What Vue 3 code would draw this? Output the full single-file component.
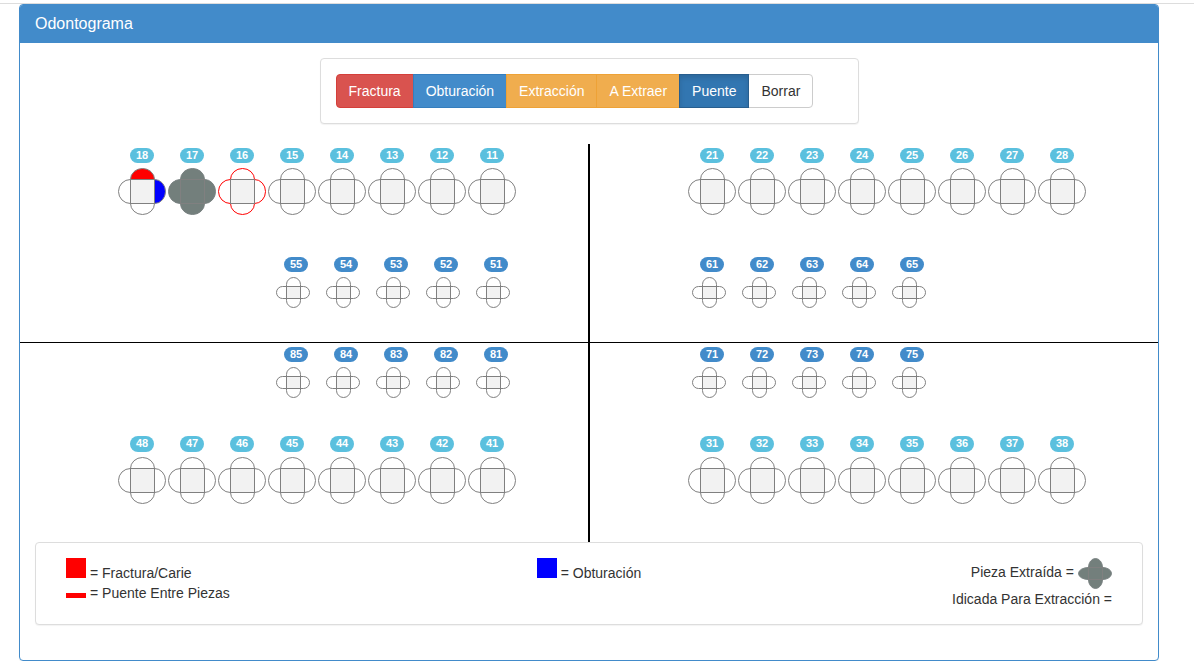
<script setup>
import { h, ref } from 'vue'

const tools = [
  { id: 'fractura', label: 'Fractura', kind: 'danger' },
  { id: 'obturacion', label: 'Obturación', kind: 'primary' },
  { id: 'extraccion', label: 'Extracción', kind: 'warning' },
  { id: 'extraer', label: 'A Extraer', kind: 'warning' },
  { id: 'puente', label: 'Puente', kind: 'primary' },
  { id: 'borrar', label: 'Borrar', kind: 'default' },
]
const activeTool = ref('puente')

const quadrants = [
  {
    id: 'upper-left',
    rows: [
      { size: 'adult', teeth: [18, 17, 16, 15, 14, 13, 12, 11] },
      { size: 'child', teeth: [55, 54, 53, 52, 51] },
    ],
  },
  {
    id: 'upper-right',
    rows: [
      { size: 'adult', teeth: [21, 22, 23, 24, 25, 26, 27, 28] },
      { size: 'child', teeth: [61, 62, 63, 64, 65] },
    ],
  },
  {
    id: 'lower-left',
    rows: [
      { size: 'child', teeth: [85, 84, 83, 82, 81] },
      { size: 'adult', teeth: [48, 47, 46, 45, 44, 43, 42, 41] },
    ],
  },
  {
    id: 'lower-right',
    rows: [
      { size: 'child', teeth: [71, 72, 73, 74, 75] },
      { size: 'adult', teeth: [31, 32, 33, 34, 35, 36, 37, 38] },
    ],
  },
]

const EXTRACTED = '#737f7c'
const marks = {
  18: { top: 'red', right: 'blue' },
  17: {
    top: EXTRACTED,
    right: EXTRACTED,
    bottom: EXTRACTED,
    left: EXTRACTED,
    center: EXTRACTED,
    outline: '#788080',
  },
  16: { outline: 'red' },
}

const shapes = {
  adult: {
    w: 48,
    h: 47,
    top: 'M12.5 11.5A12 11 0 0 1 36.5 11.5Z',
    right: 'M36.5 11.5A11 12 0 0 1 36.5 35.5Z',
    bottom: 'M36.5 35.5A12 11 0 0 1 12.5 35.5Z',
    left: 'M12.5 35.5A12 12 0 0 1 12.5 11.5Z',
    square: { x: 12.5, y: 11.5, width: 24, height: 24 },
  },
  child: {
    w: 34,
    h: 31,
    top: 'M10.5 9.5V7.5A7 7 0 0 1 24.5 7.5V9.5Z',
    right: 'M24.5 9.5H27.5A6 6 0 0 1 27.5 21.5H24.5Z',
    bottom: 'M24.5 21.5V23.5A7 7 0 0 1 10.5 23.5V21.5Z',
    left: 'M10.5 21.5H6.5A6 6 0 0 1 6.5 9.5H10.5Z',
    square: { x: 10.5, y: 9.5, width: 14, height: 12 },
  },
  legend: {
    w: 34,
    h: 31,
    top: 'M10.5 9.5A7 9 0 0 1 24.5 9.5Z',
    right: 'M24.5 9.5A9 6 0 0 1 24.5 21.5Z',
    bottom: 'M24.5 21.5A7 9 0 0 1 10.5 21.5Z',
    left: 'M10.5 21.5A10 6 0 0 1 10.5 9.5Z',
    square: { x: 10.5, y: 9.5, width: 14, height: 12 },
  },
}

function Tooth({ size, mark = {} }) {
  const s = shapes[size]
  return h(
    'svg',
    { width: s.w, height: s.h, viewBox: `0 0 ${s.w} ${s.h}`, 'aria-hidden': 'true' },
    [
      ...['top', 'right', 'bottom', 'left'].map((side) =>
        h('path', { d: s[side], fill: mark[side] || 'white', stroke: mark.outline || 'gray' }),
      ),
      h('rect', { ...s.square, fill: mark.center || '#f2f2f2', stroke: 'gray' }),
    ],
  )
}
Tooth.props = ['size', 'mark']
</script>

<template>
  <div class="page">
    <main class="panel">
      <header class="heading">
        <h1>Odontograma</h1>
      </header>

      <div class="toolbar box" role="group" aria-label="Odontograma">
        <button
          v-for="tool in tools"
          :key="tool.id"
          type="button"
          class="tool"
          :class="[tool.kind, { active: tool.id === activeTool }]"
          :aria-pressed="tool.id === activeTool"
          @click="activeTool = tool.id"
        >{{ tool.label }}</button>
      </div>

      <div class="chart">
        <section v-for="q in quadrants" :key="q.id" class="quadrant" :class="q.id">
          <div v-for="row in q.rows" :key="row.size" class="row" :class="row.size">
            <div v-for="n in row.teeth" :key="n" class="slot">
              <span class="badge">{{ n }}</span>
              <Tooth class="tooth" :size="row.size" :mark="marks[n]" />
            </div>
          </div>
        </section>
      </div>

      <footer class="legend box">
        <div class="column">
          <div class="entry first"><i class="swatch red"></i><span>= Fractura/Carie</span></div>
          <div class="entry"><i class="swatch bar"></i><span>= Puente Entre Piezas</span></div>
        </div>
        <div class="column middle">
          <div class="entry first"><i class="swatch blue"></i><span>= Obturación</span></div>
        </div>
        <div class="column end">
          <div class="entry extracted">
            <span>Pieza Extraída =</span>
            <Tooth class="tooth" size="legend" :mark="marks[17]" />
          </div>
          <div class="entry"><span>Idicada Para Extracción =</span></div>
        </div>
      </footer>
    </main>
  </div>
</template>

<style>
body {
  background: #fff;
}
</style>

<style scoped>
.page {
  margin-top: 3px;
  padding: 0 35px 0 19px;
  border-top: 1px solid #ddd;
  font-family: "Liberation Sans", Arial, sans-serif;
  font-size: 14px;
  line-height: 20px;
  color: #333;
}
.panel {
  border: 1px solid #428bca;
  border-radius: 4px;
  padding-bottom: 35px;
  box-shadow: 0 1px 1px rgba(0, 0, 0, 0.05);
}
.heading {
  padding: 9px 15px;
  background: #428bca;
  color: #fff;
  border-radius: 3px 3px 0 0;
}
.heading h1 {
  margin: 0;
  font-size: 16px;
  font-weight: 500;
  line-height: 20px;
}
.box {
  box-sizing: border-box;
  border: 1px solid #ddd;
  border-radius: 4px;
  background: #fff;
  box-shadow: 0 1px 1px rgba(0, 0, 0, 0.05);
}
.toolbar {
  display: flex;
  width: calc(50% - 30px);
  margin: 15px auto 20px;
  padding: 15px;
}
.tool {
  padding: 6px 12px;
  border: 1px solid;
  font: inherit;
  white-space: nowrap;
  color: #fff;
  cursor: pointer;
}
.tool + .tool {
  margin-left: -1px;
}
.tool:first-child {
  border-radius: 4px 0 0 4px;
}
.tool:last-child {
  border-radius: 0 4px 4px 0;
}
.danger {
  background: #d9534f;
  border-color: #d43f3a;
}
.primary {
  background: #428bca;
  border-color: #357ebd;
}
.warning {
  background: #f0ad4e;
  border-color: #eea236;
}
.default {
  background: #fff;
  border-color: #ccc;
  color: #333;
}
.tool.active {
  position: relative;
  background: #3276b1;
  border-color: #285e8e;
  box-shadow: inset 0 3px 5px rgba(0, 0, 0, 0.125);
}
.chart {
  display: grid;
  grid-template-columns: calc(50% + 1px) 1fr;
}
.quadrant {
  padding: 4px 0 0 98px;
}
.upper-left,
.lower-left {
  border-right: 2px solid #000;
}
.upper-left,
.upper-right {
  padding-bottom: 34px;
  border-bottom: 1px solid #000;
}
.lower-left,
.lower-right {
  padding-bottom: 38px;
}
.row {
  display: flex;
}
.slot {
  width: 50px;
}
.upper-left .child,
.lower-left .child {
  margin-left: 158px;
}
.upper-right .child,
.lower-right .child {
  margin-left: 4px;
}
.upper-left .child,
.upper-right .child {
  margin-top: 42px;
}
.lower-left .adult,
.lower-right .adult {
  margin-top: 38px;
}
.badge {
  display: block;
  width: 24px;
  height: 15px;
  margin: 0 0 5px 12px;
  border-radius: 8px;
  background: #5bc0de;
  color: #fff;
  font-size: 11px;
  font-weight: 700;
  line-height: 15px;
  text-align: center;
}
.child .badge {
  margin-left: 8px;
  background: #428bca;
}
.lower-left .adult .badge,
.lower-right .adult .badge {
  height: 16px;
}
.tooth {
  display: block;
  flex: none;
}
.legend {
  display: grid;
  grid-template-columns: 1fr 1fr 1fr;
  margin: 0 15px;
  padding: 15px 30px;
}
.entry {
  display: flex;
  gap: 4px;
  align-items: flex-end;
}
.first {
  height: 25px;
}
.middle .entry {
  justify-content: center;
}
.end .entry {
  justify-content: flex-end;
}
.swatch {
  width: 20px;
  height: 20px;
}
.first .swatch {
  align-self: flex-start;
}
.red {
  background: red;
}
.blue {
  background: blue;
}
.bar {
  height: 5px;
  margin-bottom: 5px;
  background: red;
}
.extracted {
  align-items: center;
}
.extracted span {
  padding-bottom: 3px;
}
</style>
